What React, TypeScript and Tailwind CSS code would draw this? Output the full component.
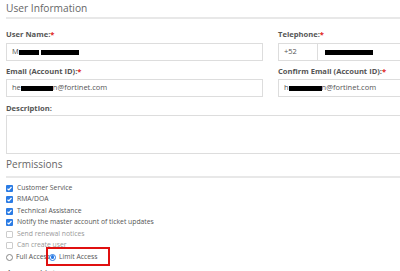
import React from 'react';

const Req = () => <span className="text-[#e02020]">*</span>;

const Label: React.FC<{ children: React.ReactNode; req?: boolean }> = ({ children, req }) => (
  <div className="h-[10px] text-[7.6px] leading-[10px] font-bold text-[#555]">
    {children}
    {req && <Req />}
  </div>
);

const Bar: React.FC<{ w: number }> = ({ w }) => (
  <span className="inline-block h-[5px] bg-black" style={{ width: w }} />
);

const Check: React.FC<{ on?: boolean; label: string }> = ({ on, label }) => (
  <div className="flex items-center h-[11.5px] gap-[4px]">
    {on ? (
      <svg width="7" height="7" viewBox="0 0 7 7" className="shrink-0">
        <rect x="0" y="0" width="7" height="7" rx="1" fill="#2a7be4" />
        <path d="M1.5 3.7 L2.9 5 L5.5 2" stroke="white" strokeWidth="1.2" fill="none" />
      </svg>
    ) : (
      <span className="shrink-0 w-[7px] h-[7px] border border-[#ccc] rounded-[1px] bg-white" />
    )}
    <span className={`text-[6.8px] leading-none ${on ? 'text-[#555]' : 'text-[#999]'}`}>{label}</span>
  </div>
);

export default function App() {
  return (
    <div className="w-[400px] h-[271px] overflow-hidden bg-white" style={{ fontFamily: '"Open Sans", "Liberation Sans", sans-serif' }}>
      <div className="w-[540px] pl-[6px]">
        <h2 className="h-[17px] text-[10.2px] leading-[17px] text-[#666] font-normal">User Information</h2>
        <div className="h-[2px] bg-[#e8e8e8]" />

        <div className="grid grid-cols-[257px_257px] gap-x-[15px] mt-[10px]">
          <div>
            <Label req>User Name:</Label>
            <div className="mt-[4px] h-[18px] border border-[#ddd] flex items-center px-[5px] text-[7.5px] text-[#555]">
              M<Bar w={20} /><span className="w-[2px]" /><Bar w={38} />
            </div>
          </div>
          <div>
            <Label req>Telephone:</Label>
            <div className="mt-[4px] h-[18px] border border-[#ddd] flex items-center text-[7.5px] text-[#555]">
              <span className="w-[39px] h-full flex items-center px-[5px] border-r border-[#ddd]">+52</span>
              <span className="ml-[7px] flex"><Bar w={48} /></span>
            </div>
          </div>

          <div className="mt-[5px]">
            <Label req>Email (Account ID):</Label>
            <div className="mt-[3px] h-[18px] border border-[#ddd] flex items-center px-[5px] text-[7.5px] text-[#555]">
              he<Bar w={32} />n@fortinet.com
            </div>
          </div>
          <div className="mt-[5px]">
            <Label req>Confirm Email (Account ID):</Label>
            <div className="mt-[3px] h-[18px] border border-[#ddd] flex items-center px-[5px] text-[7.5px] text-[#555]">
              h<Bar w={33} />n@fortinet.com
            </div>
          </div>
        </div>

        <div className="mt-[6px]">
          <Label>Description:</Label>
          <div className="mt-[2px] h-[39px] border border-[#ddd]" />
        </div>

        <h2 className="mt-[2px] h-[16px] text-[10px] leading-[16px] text-[#666] font-normal">Permissions</h2>
        <div className="h-[1.5px] bg-[#e8e8e8] mt-[4px]" />

        <div className="mt-[5px] flex flex-col">
          <Check on label="Customer Service" />
          <Check on label="RMA/DOA" />
          <Check on label="Technical Assistance" />
          <Check on label="Notify the master account of ticket updates" />
          <Check label="Send renewal notices" />
          <Check label="Can create user" />
          <div className="relative flex items-center h-[11px] text-[6.8px] text-[#555]">
            <span className="shrink-0 w-[7px] h-[7px] rounded-full border border-[#888] bg-white" />
            <span className="ml-[3px] leading-none">Full Access</span>
            <span className="ml-[-1px] shrink-0 w-[7px] h-[7px] rounded-full border border-[#2a7be4] bg-white flex items-center justify-center">
              <span className="w-[3.5px] h-[3.5px] rounded-full bg-[#2a7be4]" />
            </span>
            <span className="ml-[3px] leading-none">Limit Access</span>
            <div className="absolute left-[40px] top-[-5px] w-[64px] h-[19px] border-[2.5px] border-[#e01010]" />
          </div>
          <h2 className="mt-[3px] h-[16px] text-[10px] leading-[16px] text-[#666]">Access List</h2>
        </div>
      </div>
    </div>
  );
}
